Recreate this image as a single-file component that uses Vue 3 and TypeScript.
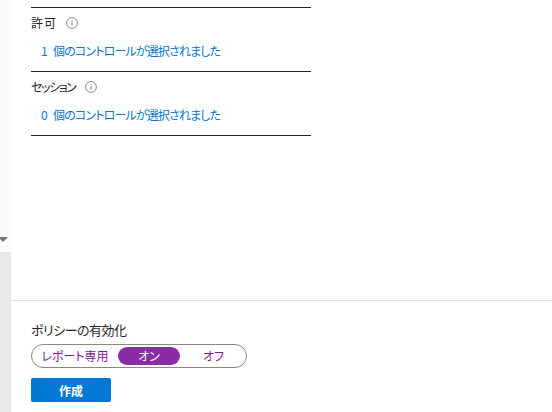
<script setup lang="ts">
const sections = [
  { label: "許可", count: 1, tight: false },
  { label: "セッション", count: 0, tight: true },
];
const modes = ["レポート専用", "オン", "オフ"];
const activeMode = "オン";
</script>

<template>
  <div class="page">
    <aside class="rail">
      <div class="rail-top">
        <span class="arrow"></span>
      </div>
    </aside>
    <main class="main">
      <div class="upper">
        <section v-for="s in sections" :key="s.label" class="section">
          <div class="label">
            <span :class="{ tight: s.tight }">{{ s.label }}</span>
            <svg class="info" width="12" height="12" viewBox="0 0 12 12">
              <circle cx="6" cy="6" r="5.4" fill="none" stroke="#7a7a7a" stroke-width="0.9" />
              <rect x="5.5" y="5" width="1" height="3.6" fill="#7a7a7a" />
              <rect x="5.5" y="3.2" width="1" height="1" fill="#7a7a7a" />
            </svg>
          </div>
          <a class="link"><span class="count">{{ s.count }}</span>個のコントロールが選択されました</a>
        </section>
      </div>
      <footer class="footer">
        <div class="enable-label">ポリシーの有効化</div>
        <div class="toggle">
          <span
            v-for="m in modes"
            :key="m"
            class="mode"
            :class="{ active: m === activeMode }"
          >{{ m }}</span>
        </div>
        <button class="create">作成</button>
      </footer>
    </main>
  </div>
</template>

<style>
html,
body {
  margin: 0;
  background: #fff;
}
</style>

<style scoped>
.page {
  display: flex;
  width: 552px;
  height: 412px;
  overflow: hidden;
  font-family: "Noto Sans CJK JP", "Liberation Sans", sans-serif;
  font-size: 12px;
  font-feature-settings: "palt";
  color: #252423;
}

.rail {
  width: 11px;
  flex: none;
  background: #e8e8e8;
  display: flex;
  flex-direction: column;
}

.rail-top {
  height: 252px;
  background: #fafafa;
  display: flex;
  align-items: flex-end;
  justify-content: center;
  padding-bottom: 10px;
  box-sizing: border-box;
}

.arrow {
  width: 0;
  height: 0;
  border-left: 5px solid transparent;
  border-right: 5px solid transparent;
  border-top: 5px solid #777;
  margin-left: -5px;
}

.main {
  flex: 1;
  display: flex;
  flex-direction: column;
  min-width: 0;
}

.upper {
  height: 301px;
  box-sizing: border-box;
  padding: 7px 0 0 20px;
  border-bottom: 1px solid #e1e1e1;
}

.section {
  width: 280px;
  height: 64px;
  border-top: 1px solid #252423;
  box-sizing: border-box;
}

.section:last-child {
  height: 65px;
  border-bottom: 1px solid #252423;
}

.label {
  display: flex;
  align-items: center;
  gap: 9px;
  height: 30px;
  line-height: 30px;
}

.label span:not(.tight) {
  letter-spacing: 1px;
}

.tight {
  letter-spacing: -1.4px;
}

.link {
  display: block;
  padding-left: 10px;
  line-height: 18px;
  margin-top: 4px;
  color: #0078d4;
  letter-spacing: -0.85px;
}

.count {
  display: inline-block;
  width: 12px;
  letter-spacing: 0;
}

.footer {
  padding: 20px 0 0 20px;
}

.enable-label {
  font-size: 13px;
  line-height: 18px;
  letter-spacing: -0.5px;
}

.toggle {
  display: flex;
  align-items: center;
  width: 216px;
  height: 24px;
  margin-top: 5px;
  border: 1px solid #8a8886;
  border-radius: 12px;
  box-sizing: border-box;
  padding: 2px 2px 2px 0;
}

.mode {
  height: 18px;
  line-height: 18px;
  text-align: center;
  color: #881798;
  border-radius: 9px;
}

.mode:nth-child(1) {
  width: 86px;
}

.mode:nth-child(2) {
  width: 62px;
}

.mode:nth-child(3) {
  flex: 1;
  padding-left: 3px;
}

.mode.active {
  background: #8a2da5;
  color: #fff;
}

.create {
  display: block;
  width: 80px;
  height: 24px;
  margin-top: 10px;
  padding: 0;
  border: 0;
  border-radius: 2px;
  background: #0078d4;
  color: #fff;
  font: 700 12px "Noto Sans CJK JP", "Liberation Sans", sans-serif;
}
</style>
